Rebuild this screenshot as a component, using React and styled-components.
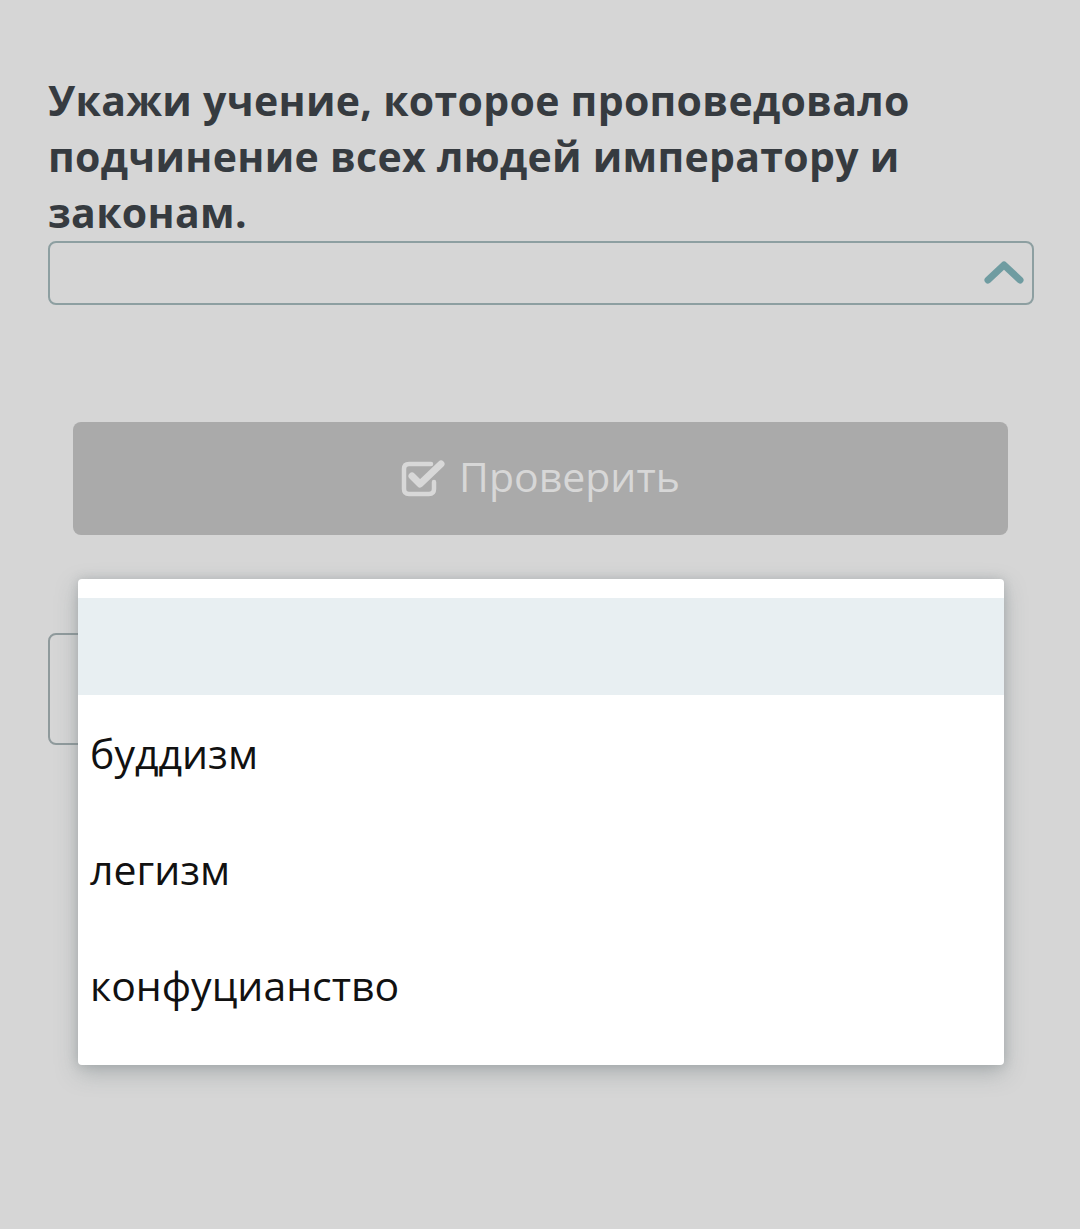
import React from "react";
import styled, { createGlobalStyle } from "styled-components";

const GlobalStyle = createGlobalStyle`
  html, body {
    margin: 0;
    padding: 0;
    background: #d6d6d6;
  }
  body {
    font-family: "Open Sans", "Liberation Sans", sans-serif;
  }
`;

const Page = styled.div`
  position: relative;
  width: 1080px;
  height: 1229px;
  background: #d6d6d6;
  overflow: hidden;
`;

const Content = styled.div`
  display: flex;
  flex-direction: column;
  padding: 72px 46px 0 48px;
`;

const Question = styled.h1`
  margin: 0;
  font-size: 41px;
  line-height: 56px;
  font-weight: 700;
  color: #363b40;
  letter-spacing: 0.3px;
`;

const SelectBox = styled.div`
  display: flex;
  align-items: center;
  justify-content: flex-end;
  height: 60px;
  margin-top: 1px;
  padding-right: 7px;
  border: 2px solid #8d9fa1;
  border-radius: 8px;
`;

const CheckButton = styled.div`
  display: flex;
  align-items: center;
  justify-content: center;
  gap: 14px;
  height: 113px;
  margin: 117px 26px 0 25px;
  background: #aaaaaa;
  border-radius: 8px;
  font-size: 41px;
  color: #d7d7d7;
`;

const Label = styled.span`
  line-height: 1;
  margin-bottom: 4px;
`;

const HiddenBox = styled.div`
  width: 300px;
  height: 108px;
  margin-top: 98px;
  border: 2px solid #8f9a9c;
  border-radius: 8px;
`;

const Dropdown = styled.ul`
  position: absolute;
  left: 78px;
  top: 579px;
  width: 926px;
  margin: 0;
  padding: 19px 0 22px;
  list-style: none;
  background: #ffffff;
  border-radius: 4px;
  box-shadow: 0 8px 22px rgba(120, 130, 132, 0.45), 0 0 10px rgba(120, 130, 132, 0.3);
`;

const Option = styled.li`
  display: flex;
  align-items: center;
  height: ${(p) => (p.$empty ? "97px" : "116px")};
  padding-left: 12px;
  background: ${(p) => (p.$active ? "#e8eff2" : "#ffffff")};
  font-size: 41px;
  color: #111111;
`;

const Chevron = () => (
  <svg width="42" height="30" viewBox="0 0 42 30">
    <path
      d="M5 22 L21 7 L37 22"
      fill="none"
      stroke="#6f9ca1"
      strokeWidth="7"
      strokeLinecap="round"
      strokeLinejoin="round"
    />
  </svg>
);

const CheckSquare = () => (
  <svg width="44" height="38" viewBox="0 0 44 38">
    <path
      d="M30 4 H8 Q3 4 3 9 V29 Q3 34 8 34 H28 Q33 34 33 29 V22"
      fill="none"
      stroke="#d8d8d8"
      strokeWidth="4.5"
      strokeLinecap="round"
    />
    <path
      d="M11 16 L19 24 L40 4"
      fill="none"
      stroke="#d8d8d8"
      strokeWidth="7"
      strokeLinecap="round"
      strokeLinejoin="round"
    />
  </svg>
);

const options = ["буддизм", "легизм", "конфуцианство"];

export default function App() {
  return (
    <Page>
      <GlobalStyle />
      <Content>
        <Question>
          Укажи учение, которое проповедовало подчинение всех людей императору и законам.
        </Question>
        <SelectBox>
          <Chevron />
        </SelectBox>
        <CheckButton>
          <CheckSquare />
          <Label>Проверить</Label>
        </CheckButton>
        <HiddenBox />
      </Content>
      <Dropdown>
        <Option $empty $active />
        {options.map((o) => (
          <Option key={o}>{o}</Option>
        ))}
      </Dropdown>
    </Page>
  );
}
